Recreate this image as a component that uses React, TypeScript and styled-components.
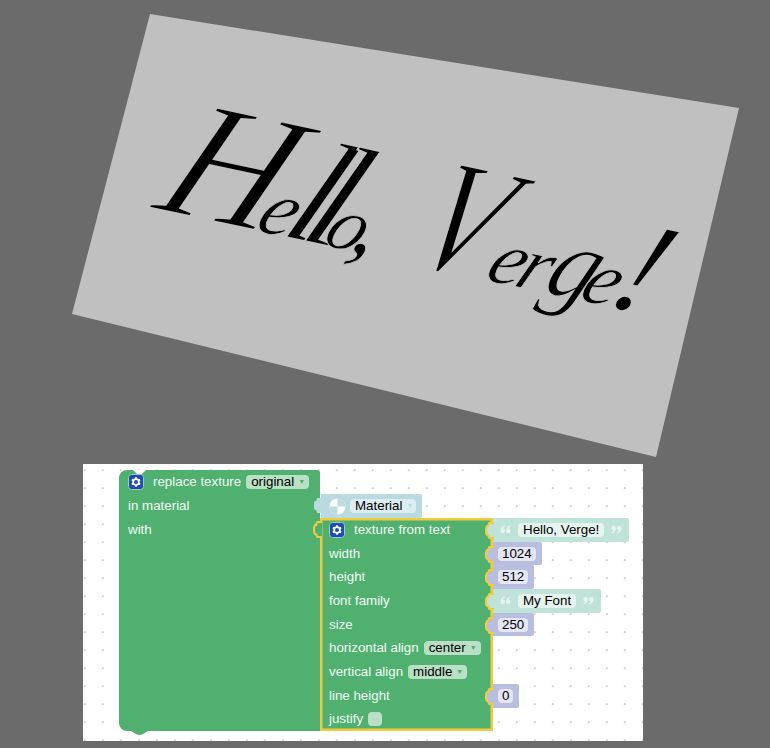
import React from "react";
import styled, { createGlobalStyle } from "styled-components";

const Global = createGlobalStyle`
  html, body { margin: 0; padding: 0; background: #6b6b6b; }
  #root { width: 770px; height: 748px; overflow: hidden; }
`;

const Page = styled.div`
  width: 770px;
  height: 748px;
  background: #6b6b6b;
  font-family: "Liberation Sans", Arial, sans-serif;
`;

const Scene = styled.svg`
  display: block;
  width: 770px;
  height: 464px;
`;

const Lettering = styled.text`
  font-family: "Liberation Serif", serif;
  font-style: italic;
  fill: #000;
  stroke: #c0c0c0;
  paint-order: fill stroke;
`;

const Workspace = styled.div`
  box-sizing: border-box;
  width: 560px;
  height: 277px;
  margin-left: 83px;
  padding: 6px 0 0 36px;
  background-color: #fff;
  background-image: radial-gradient(circle at 1.7px 6.3px, #d6d6d6 0, #d6d6d6 1px, transparent 1.3px);
  background-size: 18px 18px;
`;

const MainBlock = styled.div`
  position: relative;
  display: flex;
  align-items: stretch;
  width: max-content;
`;

const MainColumn = styled.div`
  width: 201px;
  height: 261px;
  background: #50b06f;
  border-radius: 8px 3px 0 8px;
`;

const Notch = styled.svg`
  position: absolute;
  left: 14px;
  top: 0;
  width: 13px;
  height: 4px;
`;

const BottomTab = styled.svg`
  position: absolute;
  left: 12px;
  bottom: -4px;
  width: 17px;
  height: 4px;
`;

const Row = styled.div<{ $h?: number }>`
  display: flex;
  align-items: center;
  height: ${(p) => p.$h ?? 23.7}px;
  padding-left: 9px;
  box-sizing: border-box;
  white-space: nowrap;
`;

const Label = styled.span<{ $gap?: number }>`
  font-size: 13.33px;
  line-height: 16px;
  color: #f2fbf5;
  margin-right: ${(p) => p.$gap ?? 0}px;
`;

const Dropdown = styled.span`
  display: inline-flex;
  align-items: center;
  height: 14px;
  padding: 0 4px 0 5px;
  border-radius: 4px;
  background: #b9dfc5;
  color: #000;
  font-size: 13.33px;
  line-height: 14px;
`;

const Arrow = styled.span<{ $c?: string }>`
  margin-left: 4px;
  font-size: 7px;
  color: ${(p) => p.$c ?? "#50b06f"};
`;

const Check = styled.span`
  width: 14px;
  height: 14px;
  border-radius: 4px;
  background: #b9dfc5;
`;

const GearBadge = styled.svg`
  flex: none;
  width: 16px;
  height: 16px;
  margin-right: 9px;
`;

const Inputs = styled.div`
  display: flex;
  flex-direction: column;
  padding-top: 24px;
`;

const Nested = styled.div`
  display: flex;
  align-items: flex-start;
`;

const TextureBlock = styled.div`
  position: relative;
  width: 173px;
  background: #50b06f;
  box-shadow: inset 0 0 0 2.5px #f2cb3d;
`;

const Values = styled.div`
  display: flex;
  flex-direction: column;
`;

const ValueSlot = styled.div`
  display: flex;
  height: 23.7px;
`;

const ValueBlock = styled.div<{ $bg: string }>`
  position: relative;
  display: inline-flex;
  align-items: center;
  box-sizing: border-box;
  height: 100%;
  background: ${(p) => p.$bg};
  border-radius: 0 2px 2px 0;
`;

const MaterialBlock = styled(ValueBlock)`
  height: 24px;
  width: 101px;
  padding-left: 8px;
  align-self: flex-start;
  margin-left: 1px;
`;

const Tab = styled.svg<{ $left?: number; $top?: number }>`
  position: absolute;
  left: ${(p) => p.$left ?? -8}px;
  top: ${(p) => p.$top ?? 4}px;
  width: 9px;
  height: 17px;
  overflow: visible;
`;

const NumberField = styled.span`
  display: inline-flex;
  align-items: center;
  justify-content: center;
  height: 14px;
  margin: 0 6px 0 5px;
  padding: 0 4px;
  border-radius: 4px;
  background: #e4e6f4;
  color: #000;
  font-size: 13.33px;
  line-height: 14px;
`;

const TextField = styled(NumberField)`
  margin: 0;
  padding: 0 5px;
  background: #e6f4ef;
`;

const MaterialField = styled(NumberField)`
  margin: 0 0 0 4px;
  padding: 0 3px 0 5px;
  background: #dceef1;
`;

const QuoteMark = styled.svg<{ $flip?: boolean }>`
  flex: none;
  width: 11px;
  height: 9px;
  margin: 0 7px;
  transform: ${(p) => (p.$flip ? "rotate(180deg)" : "none")};
`;

const Quote = ({ flip }: { flip?: boolean }) => (
  <QuoteMark viewBox="0 0 11 9" $flip={flip}>
    <path
      d="M4.8.5C2.4 1.4.4 3.2.4 5.8a2.3 2.3 0 1 0 2.6-2.2C3.2 2.7 3.9 1.9 5 1.3ZM10.4.5C8 1.4 6 3.2 6 5.8a2.3 2.3 0 1 0 2.6-2.2c.2-.9.9-1.7 2-2.3Z"
      fill="#e6f4ef"
    />
  </QuoteMark>
);

const GearIcon = () => (
  <GearBadge viewBox="0 0 16 16">
    <rect x="0.5" y="0.5" width="15" height="15" rx="3" fill="#1f4bb8" stroke="#9dd0ae" />
    <circle cx="8" cy="8" r="2.9" fill="none" stroke="#fff" strokeWidth="1.8" />
    <path
      d="M8 3.2v1.6M8 11.2v1.6M3.9 5.6l1.4.8M10.7 9.6l1.4.8M3.9 10.4l1.4-.8M10.7 6.4l1.4-.8"
      stroke="#fff"
      strokeWidth="1.8"
    />
  </GearBadge>
);

const tabPath = "M9 1H4.5C3 1 4.5 4 2.5 4C1 4 1 6 1 8.5C1 11 1 13 2.5 13C4.5 13 3 16 4.5 16H9";

const Socket = ({ bg }: { bg: string }) => (
  <Tab viewBox="0 0 9 17">
    <path d={tabPath} fill={bg} stroke="#f2cb3d" strokeWidth="2.2" />
  </Tab>
);

const glyphs: [string, number, number, number, number][] = [
  ["H", 0, 172, 0.95, 2.6],
  ["e", 105, 80, 1, 0.8],
  ["l", 131, 150, 1, 2],
  ["l", 150, 150, 1, 2],
  ["o", 174, 76, 1, 0.8],
  [",", 201, 95, 1, 0.8],
  ["V", 262, 165, 0.72, 2.4],
  ["e", 340, 78, 1, 0.8],
  ["r", 370, 78, 1, 0.8],
  ["g", 399, 105, 0.9, 1.4],
  ["e", 436, 78, 1, 0.8],
  ["!", 463, 135, 1, 2],
];

const Stringy = ({ text }: { text: string }) => (
  <ValueBlock $bg="#bfe3d8">
    <Socket bg="#bfe3d8" />
    <Quote />
    <TextField>{text}</TextField>
    <Quote flip />
  </ValueBlock>
);

const Num = ({ value }: { value: string }) => (
  <ValueBlock $bg="#b9bee0">
    <Socket bg="#b9bee0" />
    <NumberField>{value}</NumberField>
  </ValueBlock>
);

export default function App() {
  return (
    <Page>
      <Global />
      <Scene viewBox="0 0 770 464">
        <polygon points="150,14 739,108 656,457 72,314" fill="#c0c0c0" />
        <g transform="matrix(0.978 0.21 -0.24 0.97 150 208) skewX(-12)">
          {glyphs.map(([c, x, s, sx, thin], i) => (
            <Lettering
              key={i}
              transform={`translate(${x} 0) scale(${sx} 1)`}
              fontSize={s}
              strokeWidth={thin}
            >
              {c}
            </Lettering>
          ))}
        </g>
      </Scene>
      <Workspace>
        <MainBlock>
          <MainColumn>
            <Row $h={24}>
              <GearIcon />
              <Label $gap={5}>replace texture</Label>
              <Dropdown>
                original<Arrow>▼</Arrow>
              </Dropdown>
            </Row>
            <Row $h={24}>
              <Label>in material</Label>
            </Row>
            <Row $h={24}>
              <Label>with</Label>
            </Row>
          </MainColumn>
          <Notch viewBox="0 0 13 4">
            <path d="M0 0L4 4H9L13 0Z" fill="#fff" />
          </Notch>
          <BottomTab viewBox="0 0 17 4">
            <path d="M0 0L5 3Q8.5 5 12 3L17 0Z" fill="#50b06f" />
          </BottomTab>
          <Inputs>
            <MaterialBlock $bg="#b9dbe0">
              <Tab viewBox="0 0 9 17" $top={3}>
                <path d={tabPath} fill="#b9dbe0" />
              </Tab>
              <svg width="17" height="17" viewBox="0 0 17 17">
                <circle cx="8.5" cy="8.5" r="8" fill="#fff" />
                <path d="M8.5 8.5V.5A8 8 0 0 1 16.5 8.5ZM8.5 8.5V16.5A8 8 0 0 1 .5 8.5Z" fill="#bcdce1" />
              </svg>
              <MaterialField>
                Material<Arrow $c="#b9dbe0">▼</Arrow>
              </MaterialField>
            </MaterialBlock>
            <Nested>
              <TextureBlock>
                <Tab viewBox="0 0 9 17" $left={-7} $top={3}>
                  <path d={tabPath} fill="#50b06f" stroke="#f2cb3d" strokeWidth="2.2" />
                </Tab>
                <Row>
                  <GearIcon />
                  <Label>texture from text</Label>
                </Row>
                <Row><Label>width</Label></Row>
                <Row><Label>height</Label></Row>
                <Row><Label>font family</Label></Row>
                <Row><Label>size</Label></Row>
                <Row>
                  <Label $gap={5}>horizontal align</Label>
                  <Dropdown>center<Arrow>▼</Arrow></Dropdown>
                </Row>
                <Row>
                  <Label $gap={5}>vertical align</Label>
                  <Dropdown>middle<Arrow>▼</Arrow></Dropdown>
                </Row>
                <Row><Label>line height</Label></Row>
                <Row>
                  <Label $gap={5}>justify</Label>
                  <Check />
                </Row>
              </TextureBlock>
              <Values>
                <ValueSlot><Stringy text="Hello, Verge!" /></ValueSlot>
                <ValueSlot><Num value="1024" /></ValueSlot>
                <ValueSlot><Num value="512" /></ValueSlot>
                <ValueSlot><Stringy text="My Font" /></ValueSlot>
                <ValueSlot><Num value="250" /></ValueSlot>
                <ValueSlot />
                <ValueSlot />
                <ValueSlot><Num value="0" /></ValueSlot>
              </Values>
            </Nested>
          </Inputs>
        </MainBlock>
      </Workspace>
    </Page>
  );
}
